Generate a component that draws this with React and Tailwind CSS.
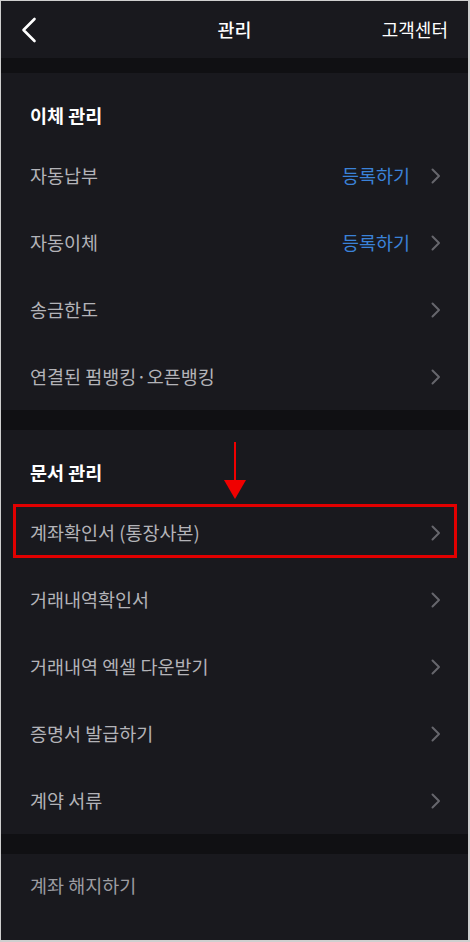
const transferRows = [
  { label: "자동납부", action: "등록하기" },
  { label: "자동이체", action: "등록하기" },
  { label: "송금한도" },
  { label: "연결된 펌뱅킹·오픈뱅킹" },
];

const documentRows = [
  { label: "계좌확인서 (통장사본)", highlight: true },
  { label: "거래내역확인서" },
  { label: "거래내역 엑셀 다운받기" },
  { label: "증명서 발급하기" },
  { label: "계약 서류" },
];

function Chevron() {
  return (
    <svg width="10" height="16" viewBox="0 0 10 16" fill="none" className="text-[#66666c]">
      <path d="M1.5 1.5 8 8l-6.5 6.5" stroke="currentColor" strokeWidth="2" strokeLinecap="round" strokeLinejoin="round" />
    </svg>
  );
}

function Row({ label, action, highlight }) {
  return (
    <div className="relative h-[67px] flex items-center justify-between pl-[29px] pr-[27px]">
      <span className="text-[18.5px] text-[#b3b3b8]">{label}</span>
      <div className="flex items-center gap-[21px]">
        {action && <span className="text-[18.5px] text-[#3b82d9]">{action}</span>}
        <Chevron />
      </div>
      {highlight && (
        <div className="absolute left-[12px] right-[11px] top-[5px] h-[54px] border-[3px] border-[#e10000]" />
      )}
    </div>
  );
}

function SectionTitle({ children }) {
  return (
    <div className="h-[69px] pl-[29px] pt-[30px]">
      <h2 className="text-[18.5px] leading-6 font-bold text-white">{children}</h2>
    </div>
  );
}

export default function App() {
  return (
    <div
      className="w-[470px] h-[942px] overflow-hidden bg-[#19191e] border-t border-l border-r-2 border-b-2 border-[#cfcfcf]"
      style={{ fontFamily: '"Noto Sans CJK KR", "Noto Sans", sans-serif' }}
    >
      {/* header */}
      <div className="h-[57px] flex items-center justify-between pl-[20px] pr-[20px] relative">
        <svg width="16" height="26" viewBox="0 0 16 26" fill="none" className="text-white">
          <path d="M13.5 2 2.5 13l11 11" stroke="currentColor" strokeWidth="2.6" strokeLinecap="round" strokeLinejoin="round" />
        </svg>
        <span className="absolute left-1/2 -translate-x-1/2 text-[18.5px] text-white font-medium">관리</span>
        <span className="text-[18px] text-white">고객센터</span>
      </div>
      <div className="h-[15px] bg-[#101013]" />

      {/* 이체 관리 */}
      <SectionTitle>이체 관리</SectionTitle>
      {transferRows.map((r) => (
        <Row key={r.label} {...r} />
      ))}
      <div className="h-[20px] bg-[#101013]" />

      {/* 문서 관리 */}
      <div className="relative">
        <SectionTitle>문서 관리</SectionTitle>
        <div className="absolute left-[223px] top-[12px] flex flex-col items-center">
          <div className="w-[2px] h-[38px] bg-[#f00000]" />
          <div className="w-0 h-0 border-l-[11px] border-r-[11px] border-t-[19px] border-l-transparent border-r-transparent border-t-[#f00000]" />
        </div>
      </div>
      {documentRows.map((r) => (
        <Row key={r.label} {...r} />
      ))}
      <div className="h-[20px] bg-[#101013]" />

      <div className="h-[64px] flex items-center pl-[29px]">
        <span className="text-[18.5px] text-[#9c9ca1]">계좌 해지하기</span>
      </div>
    </div>
  );
}
